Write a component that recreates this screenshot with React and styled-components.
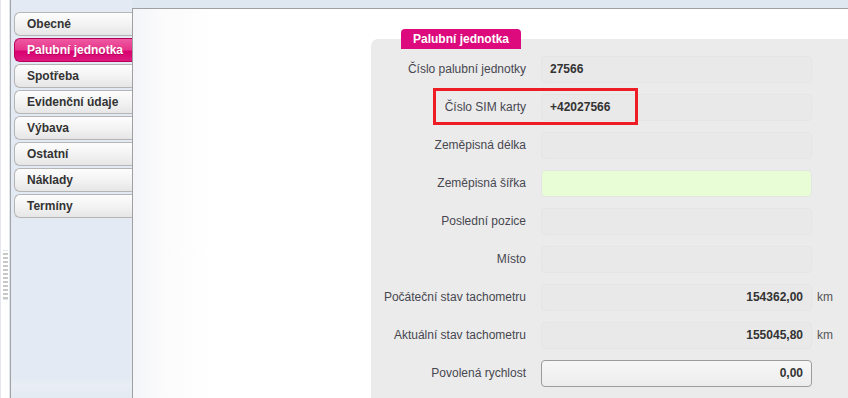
import React from 'react'
import styled, { createGlobalStyle } from 'styled-components';

const GlobalStyle = createGlobalStyle`
  html, body {
    margin: 0;
    padding: 0;
    background: #fff;
  }
  body {
    font-family: "Liberation Sans", Arial, sans-serif;
    font-size: 12px;
  }
`;

const Page = styled.div`
  display: flex;
  width: 848px;
  height: 398px;
  overflow: hidden;
  background: #fff;
`;

const Splitter = styled.div`
  width: 10px;
  flex-shrink: 0;
  box-sizing: border-box;
  border-left: 1px solid #e4e8ee;
  border-right: 1px solid #dfe6ef;
  background: #fff;
  display: flex;
  align-items: flex-start;
  padding-top: 250px;
`;

const Grip = styled.div`
  margin-left: 2px;
  width: 5px;
  height: 48px;
  border-top: 1px solid #dfe6ef;
  border-bottom: 1px solid #dfe6ef;
  background: repeating-linear-gradient(
    to bottom,
    #fff 0px,
    #fff 2px,
    #c8c8c8 2px,
    #c8c8c8 4px
  );
`;

const Sidebar = styled.div`
  width: 122px;
  flex-shrink: 0;
  box-sizing: border-box;
  border-left: 1px solid #a3a3a3;
  background: linear-gradient(to bottom, #e3eaf3 0, #e3eaf3 378px, #e9eef5 384px, #e4eaf2 398px);
  display: flex;
  flex-direction: column;
  gap: 2px;
  padding: 12px 0 0 3px;
`;

const Tab = styled.div`
  height: 24px;
  box-sizing: border-box;
  display: flex;
  align-items: center;
  padding-left: 12px;
  font-weight: bold;
  font-size: 12px;
  color: ${p => (p.$active ? '#fff' : '#333')};
  border: 1px solid ${p => (p.$active ? '#b8005a' : '#b5b5b5')};
  border-right: none;
  border-radius: 6px 0 0 6px;
  background: ${p =>
    p.$active
      ? 'linear-gradient(to bottom, #ee5aa2 0%, #e6338a 50%, #d7006f 55%, #de1a80 100%)'
      : 'linear-gradient(to bottom, #fdfdfd 0%, #f2f2f2 55%, #e6e6e6 100%)'};
  text-shadow: ${p => (p.$active ? '0 1px 0 rgba(120,0,50,0.4)' : 'none')};
`;

const Main = styled.div`
  flex: 1;
  display: flex;
  flex-direction: column;
`;

const TopBar = styled.div`
  height: 8px;
  background: #dfe7f1;
  border-bottom: 1px solid #a0a0a0;
`;

const Content = styled.div`
  flex: 1;
  border-left: 1px solid #a0a0a0;
  background: linear-gradient(to right, #f4f5f8 0, #fbfbfc 30px, #fff 80px);
  padding: 30px 0 0 238px;
`;

const Panel = styled.div`
  position: relative;
  height: 100%;
  background: #ebebeb;
  border-radius: 7px 0 0 0;
  display: flex;
  flex-direction: column;
`;

const Legend = styled.div`
  align-self: flex-start;
  margin: -10px 0 1px 30px;
  height: 20px;
  padding: 0 12px;
  display: flex;
  align-items: center;
  background: #dc0a7c;
  color: #fff;
  font-weight: bold;
  font-size: 12px;
  border-radius: 4px 4px 0 0;
`;

const Row = styled.div`
  display: grid;
  grid-template-columns: 155px 271px auto;
  column-gap: 15px;
  align-items: center;
  height: 38px;
`;

const Label = styled.div`
  text-align: right;
  color: #474750;
  font-size: 12px;
  white-space: nowrap;
`;

const Field = styled.div`
  height: 27px;
  box-sizing: border-box;
  display: flex;
  align-items: center;
  justify-content: ${p => (p.$right ? 'flex-end' : 'flex-start')};
  padding: 0 8px;
  font-weight: bold;
  font-size: 12px;
  color: #333;
  border-radius: 4px;
  border: 1px solid ${p => (p.$edit ? '#9c9c9c' : '#e5e5e5')};
  background: ${p =>
    p.$edit
      ? 'linear-gradient(to bottom, #f7f7f7 0%, #ededed 100%)'
      : p.$green
      ? '#e8fcd6'
      : '#e9e9e9'};
`;

const Unit = styled.div`
  margin-left: -10px;
  color: #555;
  font-size: 12px;
`;

const Highlight = styled.div`
  position: absolute;
  left: 62px;
  top: 49px;
  width: 205px;
  height: 37px;
  box-sizing: border-box;
  border: 3px solid #ee1c25;
  pointer-events: none;
`;

const tabs = [
  'Obecné',
  'Palubní jednotka',
  'Spotřeba',
  'Evidenční údaje',
  'Výbava',
  'Ostatní',
  'Náklady',
  'Termíny',
];

const rows = [
  { label: 'Číslo palubní jednotky', value: '27566' },
  { label: 'Číslo SIM karty', value: '+42027566' },
  { label: 'Zeměpisná délka', value: '' },
  { label: 'Zeměpisná šířka', value: '', green: true },
  { label: 'Poslední pozice', value: '' },
  { label: 'Místo', value: '' },
  { label: 'Počáteční stav tachometru', value: '154362,00', right: true, unit: 'km' },
  { label: 'Aktuální stav tachometru', value: '155045,80', right: true, unit: 'km' },
  { label: 'Povolená rychlost', value: '0,00', right: true, edit: true },
];

const App = () => {
  return (
    <>
      <GlobalStyle />
      <Page>
        <Splitter>
          <Grip />
        </Splitter>
        <Sidebar>
          {tabs.map((t) => (
            <Tab key={t} $active={t === 'Palubní jednotka'}>
              {t}
            </Tab>
          ))}
        </Sidebar>
        <Main>
          <TopBar />
          <Content>
            <Panel>
              <Legend>Palubní jednotka</Legend>
              {rows.map((r) => (
                <Row key={r.label}>
                  <Label>{r.label}</Label>
                  <Field $right={r.right} $green={r.green} $edit={r.edit}>
                    {r.value}
                  </Field>
                  {r.unit && <Unit>{r.unit}</Unit>}
                </Row>
              ))}
              <Highlight />
            </Panel>
          </Content>
        </Main>
      </Page>
    </>
  );
};

export default App;
